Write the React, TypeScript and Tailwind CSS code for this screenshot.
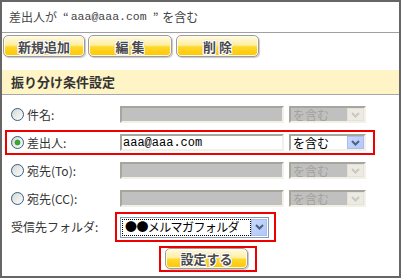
import React from 'react';

// 受信振り分け設定パネル
const Chevron = ({ color }: { color: string }) => (
  <svg width="9" height="6" viewBox="0 0 9 6">
    <path d="M1 1 L4.5 4.5 L8 1" fill="none" stroke={color} strokeWidth="2" />
  </svg>
);

const Radio = ({ checked }: { checked?: boolean }) => (
  <svg width="13" height="13" viewBox="0 0 13 13" className="shrink-0">
    <defs>
      <linearGradient id={checked ? 'rg-on' : 'rg-off'} x1="0" y1="0" x2="1" y2="1">
        <stop offset="0" stopColor="#d6d6ce" />
        <stop offset="1" stopColor="#ffffff" />
      </linearGradient>
    </defs>
    <circle cx="6.5" cy="6.5" r="6" fill={`url(#${checked ? 'rg-on' : 'rg-off'})`} stroke="#2f5f8c" strokeWidth="1" />
    {checked && <circle cx="6.5" cy="6.5" r="2.5" fill="#2fae2f" stroke="#1f7f1f" strokeWidth="0.6" />}
  </svg>
);

const YellowButton = ({ label, className = '' }: { label: string; className?: string }) => (
  <button
    className={`flex items-center justify-center rounded-[5px] border border-[#9c9c9c] bg-[linear-gradient(to_bottom,#fffbe6_0%,#ffef9e_46%,#ffd82e_54%,#ffc600_100%)] shadow-[inset_0_0_0_1px_#fffbe8,1px_1px_1px_#c8c8c8] font-['Noto_Sans_CJK_JP',sans-serif] text-[13px] font-bold leading-none text-[#4a4a4a] [text-shadow:1px_0_0_#fff,-1px_0_0_#fff,0_1px_0_#fff,0_-1px_0_#fff,1px_1px_0_#fff,-1px_-1px_0_#fff,1px_-1px_0_#fff,-1px_1px_0_#fff,0_0_3px_#999] ${className}`}
  >
    {label}
  </button>
);

const Field = ({ value, disabled }: { value?: string; disabled?: boolean }) => (
  <div
    className={`flex h-[17px] w-[164px] items-center border-2 border-t-[#a7a69c] border-l-[#a7a69c] border-b-[#f3f1e6] border-r-[#f3f1e6] pl-[1px] font-['Liberation_Mono',monospace] text-[12px] text-black ${disabled ? 'bg-[#c0c0c0]' : 'bg-white'}`}
  >
    {value}
  </div>
);

const Combo = ({ disabled }: { disabled?: boolean }) => (
  <div
    className={`ml-[5px] flex h-[17px] w-[77px] items-center justify-between border-2 border-t-[#a7a69c] border-l-[#a7a69c] border-b-[#f3f1e6] border-r-[#f3f1e6] ${disabled ? 'bg-[#c0c0c0] text-[#a3a39b]' : 'bg-white text-black'}`}
  >
    <span className="pl-[2px] font-['Noto_Sans_CJK_JP',sans-serif] text-[12px] leading-none">を含む</span>
    <div
      className={`flex h-[13px] w-[17px] items-center justify-center border ${disabled ? 'border-[#e2e1da] bg-[#eceae3]' : 'border-[#a9bdf2] bg-[linear-gradient(135deg,#c9d8fc,#b3c7f7)]'}`}
    >
      <Chevron color={disabled ? '#c9c9c0' : '#4d6185'} />
    </div>
  </div>
);

const FieldRow = ({ label, checked, value, disabled, highlighted }: { label: string; checked?: boolean; value?: string; disabled?: boolean; highlighted?: boolean }) => (
  <div className={`mx-[3px] flex h-[25px] w-[370px] items-center border-2 ${highlighted ? 'border-[#ee0000]' : 'border-transparent'}`}>
    <div className="flex w-[113px] items-center pl-[4px]">
      <Radio checked={checked} />
      <span className="ml-[3px] text-[12px] leading-none text-[#333]">{label}</span>
    </div>
    <Field value={value} disabled={disabled} />
    <Combo disabled={disabled} />
  </div>
);

export default function App() {
  return (
    <div className="flex h-[278px] w-[401px] flex-col border-2 border-[#666] bg-white font-['Noto_Sans_CJK_JP',sans-serif]">
      <div className="flex h-[31px] items-center border-b border-[#a0a0a0] pl-[7px] text-[12px] text-[#444]">
        <span>差出人が</span>
        <span className="ml-[6px] mr-[2px]">“</span>
        <span className="font-['Liberation_Mono',monospace] text-[11.5px]">aaa@aaa.com</span>
        <span className="ml-[6px] mr-[4px]">”</span>
        <span>を含む</span>
      </div>

      <div className="flex h-[37px] items-start gap-[3px] pl-[1px] pt-[2px]">
        <YellowButton label="新規追加" className="h-[22px] w-[82px]" />
        <YellowButton label="編 集" className="h-[22px] w-[84px]" />
        <YellowButton label="削 除" className="ml-[1px] h-[22px] w-[83px]" />
      </div>

      <div className="flex h-[25px] items-center border-b border-[#a8a8a8] bg-[#fff4c6] pl-[9px] text-[13px] font-bold text-[#333]">
        振り分け条件設定
      </div>

      <div className="flex flex-col gap-[3px] pt-[7px]">
        <FieldRow label="件名:" disabled />
        <FieldRow label="差出人:" checked value="aaa@aaa.com" highlighted />
        <FieldRow label="宛先(To):" disabled />
        <FieldRow label="宛先(CC):" disabled />

        <div className="-mt-[2px] ml-[9px] flex h-[30px] items-center">
          <span className="w-[104px] text-[12px] leading-none text-[#333]">受信先フォルダ:</span>
          <div className="flex h-[30px] w-[161px] items-center border-2 border-[#ee0000] pl-[3px]">
            <div className="flex h-[21px] w-[149px] items-center justify-between border border-[#7f9db9] bg-white px-[1px]">
              <span className="flex h-[17px] w-[129px] items-center outline-1 outline-dotted outline-offset-[-1px] outline-black pl-[3px] text-[12px] leading-none tracking-[-0.6px] text-black">
                ●●メルマガフォルダ
              </span>
              <div className="flex h-[17px] w-[16px] items-center justify-center border border-[#a9bdf2] bg-[linear-gradient(135deg,#c9d8fc,#b3c7f7)]">
                <Chevron color="#4d6185" />
              </div>
            </div>
          </div>
        </div>

        <div className="mt-[1px] ml-[157px] flex h-[26px] w-[98px] items-start border-2 border-[#ee0000] pl-[4px]">
          <YellowButton label="設定する" className="h-[21px] w-[83px]" />
        </div>
      </div>
    </div>
  );
}
